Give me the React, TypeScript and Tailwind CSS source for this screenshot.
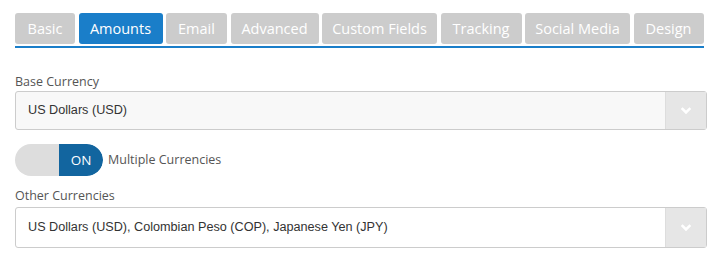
import React from "react";

const tabs: [string, string][] = [
  ["Basic", "w-[60px]"],
  ["Amounts", "w-[84px]"],
  ["Email", "w-[61px]"],
  ["Advanced", "w-[88px]"],
  ["Custom Fields", "w-[115px]"],
  ["Tracking", "w-[81px]"],
  ["Social Media", "w-[105px]"],
  ["Design", "w-[70px]"],
];

function Chevron() {
  return (
    <svg width="10" height="8" viewBox="0 0 10 8">
      <path d="M1.5 2 L5 5.5 L8.5 2" fill="none" stroke="#ffffff" strokeWidth="2.6" strokeLinecap="square" />
    </svg>
  );
}

function Select({ value, bg, h }: { value: string; bg: string; h: string }) {
  return (
    <div className={`flex w-[692px] rounded-[3px] border border-[#cccccc] ${bg} ${h}`}>
      <div className="flex flex-1 items-center pl-[12px] font-['Liberation_Sans',Arial,sans-serif] text-[12.65px] text-[#333333]">
        {value}
      </div>
      <div className="flex w-[41px] items-center justify-center border-l border-[#dddddd] bg-[#e6e6e6]">
        <Chevron />
      </div>
    </div>
  );
}

export default function App() {
  return (
    <div className="h-[258px] w-[716px] bg-white pl-[15px] pt-[13px] font-['Open_Sans',sans-serif]">
      <div className="flex w-[689px] gap-[3.5px]">
        {tabs.map(([t, w]) => (
          <div
            key={t}
            className={`flex h-[31px] shrink-0 items-center justify-center whitespace-nowrap rounded-[3px] text-[14.5px] text-white ${w} ${
              t === "Amounts" ? "bg-[#1a7ec9]" : "bg-[#cccccc]"
            }`}
          >
            {t}
          </div>
        ))}
      </div>
      <div className="mt-[2px] h-[2px] w-[689px] bg-[#1a7ec9]" />
      <div className="mt-[25px] text-[12.5px] leading-[18px] text-[#555555]">Base Currency</div>
      <Select value="US Dollars (USD)" bg="bg-[#f8f8f8]" h="h-[39px]" />
      <div className="mt-[14px] flex items-center">
        <div className="flex h-[32px] w-[88px] overflow-hidden rounded-full">
          <div className="w-[44px] bg-[#dddddd]" />
          <div className="flex w-[44px] items-center justify-center rounded-r-full bg-[#12659f] text-[13.5px] font-normal text-white">
            ON
          </div>
        </div>
        <div className="ml-[5px] text-[12.5px] text-[#555555]">Multiple Currencies</div>
      </div>
      <div className="mt-[11px] text-[12.5px] leading-[18px] text-[#555555]">Other Currencies</div>
      <div className="mt-[2px]">
        <Select value="US Dollars (USD), Colombian Peso (COP), Japanese Yen (JPY)" bg="bg-white" h="h-[41px]" />
      </div>
    </div>
  );
}
